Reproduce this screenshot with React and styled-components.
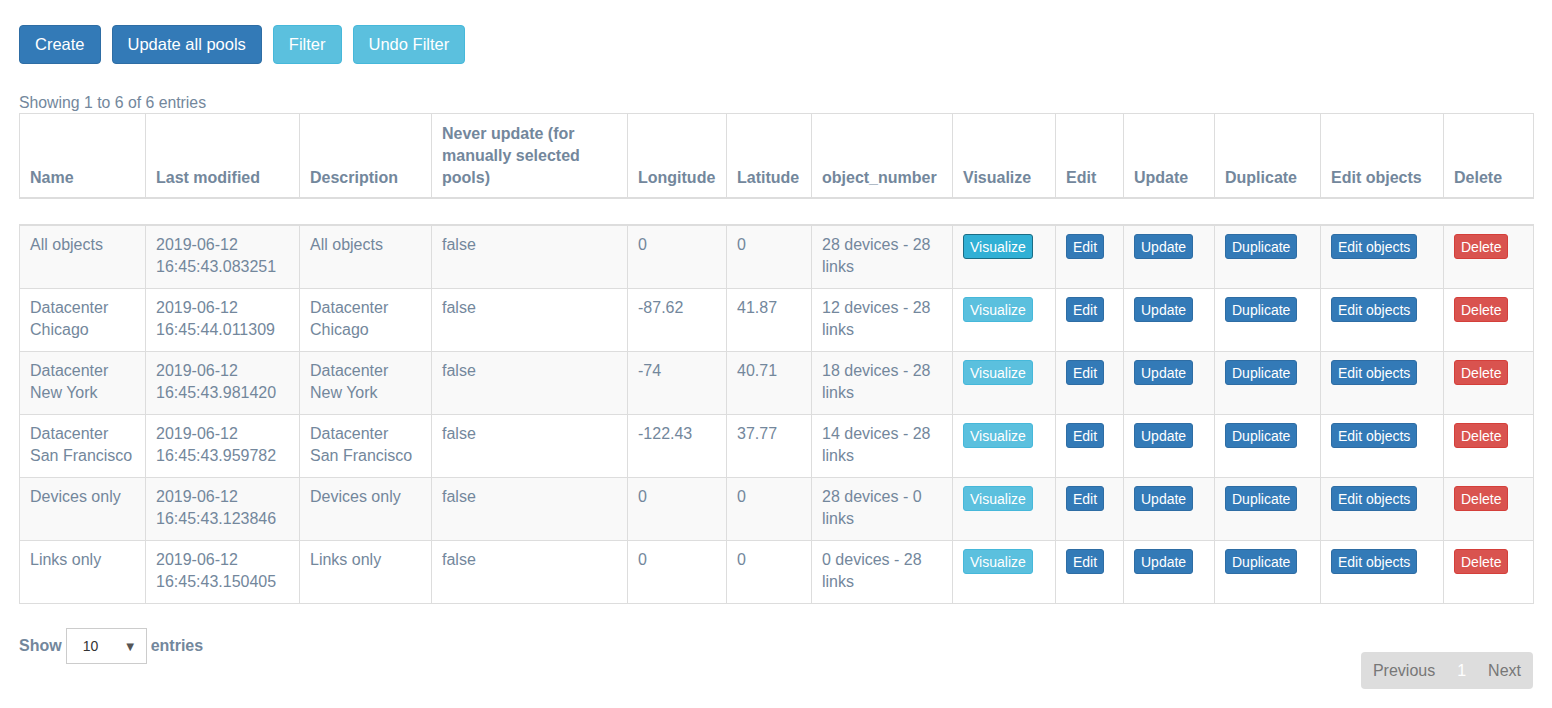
import styled, { createGlobalStyle, css } from 'styled-components';

const GlobalStyle = createGlobalStyle`
  html, body {
    margin: 0;
    padding: 0;
    background: #ffffff;
    font-family: 'Liberation Sans', Arial, sans-serif;
    color: #73879c;
  }
`;

const widths = [126, 154, 132, 196, 99, 85, 141, 103, 68, 91, 106, 123, 90];

const headers = [
  'Name', 'Last modified', 'Description', 'Never update (for manually selected pools)',
  'Longitude', 'Latitude', 'object_number', 'Visualize', 'Edit', 'Update',
  'Duplicate', 'Edit objects', 'Delete',
];

const pools = [
  ['All objects', '2019-06-12 16:45:43.083251', 'All objects', 'false', '0', '0', '28 devices - 28 links'],
  ['Datacenter Chicago', '2019-06-12 16:45:44.011309', 'Datacenter Chicago', 'false', '-87.62', '41.87', '12 devices - 28 links'],
  ['Datacenter New York', '2019-06-12 16:45:43.981420', 'Datacenter New York', 'false', '-74', '40.71', '18 devices - 28 links'],
  ['Datacenter San Francisco', '2019-06-12 16:45:43.959782', 'Datacenter San Francisco', 'false', '-122.43', '37.77', '14 devices - 28 links'],
  ['Devices only', '2019-06-12 16:45:43.123846', 'Devices only', 'false', '0', '0', '28 devices - 0 links'],
  ['Links only', '2019-06-12 16:45:43.150405', 'Links only', 'false', '0', '0', '0 devices - 28 links'],
];

const colors = {
  primary: ['#337ab7', '#2e6da4'],
  info: ['#5bc0de', '#46b8da'],
  infoActive: ['#31b0d5', '#1b6d85'],
  danger: ['#d9534f', '#d43f3a'],
};

export default function App() {
  return (
    <>
      <GlobalStyle />
      <Page>
        <Toolbar>
          <BigButton $kind="primary">Create</BigButton>
          <BigButton $kind="primary">Update all pools</BigButton>
          <BigButton $kind="info">Filter</BigButton>
          <BigButton $kind="info">Undo Filter</BigButton>
        </Toolbar>
        <Info>Showing 1 to 6 of 6 entries</Info>
        <HeadTable>
          <Cols />
          <thead>
            <tr>
              {headers.map(h => <Th key={h}>{h}</Th>)}
            </tr>
          </thead>
        </HeadTable>
        <BodyTable>
          <Cols />
          <tbody>
            {pools.map((p, i) => (
              <Row key={p[0]} $striped={i % 2 === 0}>
                {p.map((v, j) => <Td key={j}>{v}</Td>)}
                <Td><SmallButton $kind={i === 0 ? 'infoActive' : 'info'}>Visualize</SmallButton></Td>
                <Td><SmallButton $kind="primary">Edit</SmallButton></Td>
                <Td><SmallButton $kind="primary">Update</SmallButton></Td>
                <Td><SmallButton $kind="primary">Duplicate</SmallButton></Td>
                <Td><SmallButton $kind="primary">Edit objects</SmallButton></Td>
                <Td><SmallButton $kind="danger">Delete</SmallButton></Td>
              </Row>
            ))}
          </tbody>
        </BodyTable>
        <Footer>
          <Length>
            Show
            <Select>
              <span>10</span>
              <Arrow>▼</Arrow>
            </Select>
            entries
          </Length>
          <Pager>
            <PageLink>Previous</PageLink>
            <PageLink $current>1</PageLink>
            <PageLink>Next</PageLink>
          </Pager>
        </Footer>
      </Page>
    </>
  );
}

function Cols() {
  return (
    <colgroup>
      {widths.map((w, i) => <col key={i} style={{ width: w }} />)}
    </colgroup>
  );
}

const Page = styled.div`
  padding: 25px 19px 0;
`;

const Toolbar = styled.div`
  display: flex;
  gap: 11px;
`;

const buttonColors = css`
  background: ${p => colors[p.$kind][0]};
  border: 1px solid ${p => colors[p.$kind][1]};
  color: #ffffff;
`;

const BigButton = styled.button`
  ${buttonColors}
  height: 39px;
  padding: 0 15px;
  border-radius: 4px;
  font-family: 'Liberation Sans', Arial, sans-serif;
  font-size: 16.5px;
`;

const SmallButton = styled.button`
  ${buttonColors}
  height: 25px;
  padding: 0 6px;
  border-radius: 3px;
  font-family: 'Liberation Sans', Arial, sans-serif;
  font-size: 14px;
  line-height: 22px;
`;

const Info = styled.div`
  margin-top: 29px;
  font-size: 15.8px;
  line-height: 20px;
  color: #73879c;
`;

const tableBase = css`
  width: 1514px;
  table-layout: fixed;
  border-collapse: collapse;
  font-size: 16px;
  line-height: 22px;
`;

const HeadTable = styled.table`
  ${tableBase}
`;

const BodyTable = styled.table`
  ${tableBase}
  margin-top: 25px;
  border-top: 2px solid #dddddd;
`;

const Th = styled.th`
  border: 1px solid #dddddd;
  border-bottom: 2px solid #dddddd;
  padding: 9px 10px 8px;
  text-align: left;
  vertical-align: bottom;
  font-weight: bold;
  color: #73879c;
  height: 66px;
`;

const Row = styled.tr`
  background: ${p => (p.$striped ? '#f9f9f9' : '#ffffff')};
`;

const Td = styled.td`
  border: 1px solid #dddddd;
  padding: 8px 10px 10px;
  vertical-align: top;
  color: #73879c;
  height: 44px;
`;

const Footer = styled.div`
  display: flex;
  justify-content: space-between;
  align-items: flex-start;
  margin-top: 24px;
`;

const Length = styled.div`
  display: flex;
  align-items: center;
  gap: 4px;
  font-size: 16px;
  font-weight: bold;
  color: #73879c;
`;

const Select = styled.div`
  display: flex;
  align-items: center;
  justify-content: space-between;
  width: 81px;
  height: 36px;
  box-sizing: border-box;
  border: 1px solid #cccccc;
  padding: 0 9px 0 16px;
  font-size: 14px;
  font-weight: normal;
  color: #333333;
`;

const Arrow = styled.span`
  font-size: 13px;
  color: #555555;
`;

const Pager = styled.div`
  display: flex;
  align-items: center;
  margin-top: 24px;
  height: 37px;
  padding: 0 3px;
  background: #dddddd;
  border-radius: 4px;
`;

const PageLink = styled.span`
  padding: 0 9px;
  font-size: 16px;
  color: ${p => (p.$current ? '#ffffff' : '#777777')};
  ${p => p.$current && css`padding: 0 13px;`}
`;
